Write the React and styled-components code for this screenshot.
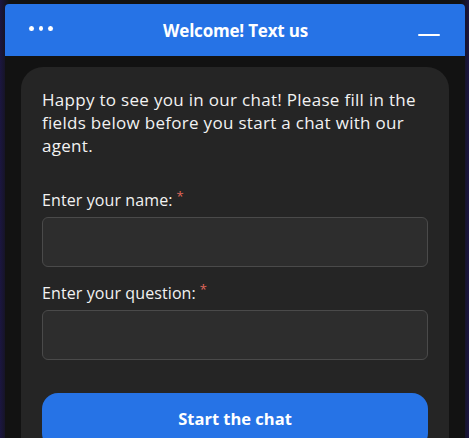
import styled, { createGlobalStyle } from "styled-components";

const GlobalStyle = createGlobalStyle`
  html, body {
    margin: 0;
    padding: 0;
    height: 100%;
    overflow: hidden;
  }
  body {
    background: linear-gradient(90deg, #1b1640 0%, #121212 2%, #121212 98%, #1b1640 100%);
    font-family: "Open Sans", "Noto Sans", sans-serif;
  }
`;

function App() {
  return (
    <Page>
      <GlobalStyle />
      <Widget>
        <Header>
          <Dots>
            <Dot />
            <Dot />
            <Dot />
          </Dots>
          <Title>Welcome! Text us</Title>
          <Minimize />
        </Header>
        <Body>
          <Card>
            <Intro>
              Happy to see you in our chat! Please fill in the fields below
              before you start a chat with our agent.
            </Intro>
            <Field>
              <Label>
                Enter your name:<Star>*</Star>
              </Label>
              <Input />
            </Field>
            <Field>
              <Label>
                Enter your question:<Star>*</Star>
              </Label>
              <Input />
            </Field>
            <StartButton>Start the chat</StartButton>
          </Card>
        </Body>
      </Widget>
    </Page>
  );
}

export default App;

const Page = styled.div`
  display: flex;
  justify-content: center;
  padding: 4px 4px 0 5px;
  height: 100vh;
  box-sizing: border-box;
`;
const Widget = styled.div`
  display: flex;
  flex-direction: column;
  width: 460px;
  background: #121212;
  border-radius: 4px 4px 0 0;
  overflow: hidden;
`;
const Header = styled.div`
  display: flex;
  flex-shrink: 0;
  align-items: center;
  justify-content: space-between;
  height: 52px;
  padding: 0 25px 0 24px;
  background: #2673e6;
  color: #ffffff;
`;
const Dots = styled.div`
  display: flex;
  gap: 5px;
  width: 24px;
  margin-top: -4px;
`;
const Dot = styled.span`
  width: 5px;
  height: 5px;
  border-radius: 50%;
  background: #ffffff;
`;
const Title = styled.div`
  font-size: 17px;
  font-weight: 700;
  letter-spacing: -0.2px;
`;
const Minimize = styled.span`
  width: 22px;
  height: 2px;
  margin-top: 10px;
  background: #ffffff;
  border-radius: 1px;
`;
const Body = styled.div`
  flex: 1 0 auto;
  padding: 11px 16px 0 16px;
`;
const Card = styled.div`
  display: flex;
  flex-direction: column;
  background: #252525;
  border-radius: 22px 22px 0 0;
  padding: 21px 21px 0 21px;
  height: 100%;
  box-sizing: border-box;
`;
const Intro = styled.p`
  margin: 0;
  color: #f2f2f2;
  font-size: 17px;
  line-height: 23px;
  letter-spacing: 0.3px;
`;
const Field = styled.div`
  display: flex;
  flex-direction: column;
  margin-top: 32px;
  & + & {
    margin-top: 15px;
  }
`;
const Label = styled.div`
  color: #f2f2f2;
  font-size: 16px;
  line-height: 22px;
  letter-spacing: 0.1px;
  margin-bottom: 6px;
`;
const Star = styled.span`
  color: #e0675b;
  font-size: 13px;
  margin-left: 4px;
  vertical-align: 5px;
  line-height: 0;
`;
const Input = styled.input`
  height: 50px;
  box-sizing: border-box;
  background: #2d2d2d;
  border: 1px solid #4a4a4a;
  border-radius: 6px;
  outline: none;
  color: #ffffff;
  font-family: inherit;
  font-size: 16px;
  padding: 0 12px;
`;
const StartButton = styled.button`
  flex-shrink: 0;
  margin-top: 33px;
  height: 56px;
  border: none;
  border-radius: 16px;
  background: #2673e6;
  color: #ffffff;
  font-family: inherit;
  font-size: 16.5px;
  font-weight: 700;
  padding-bottom: 6px;
  cursor: pointer;
`;
